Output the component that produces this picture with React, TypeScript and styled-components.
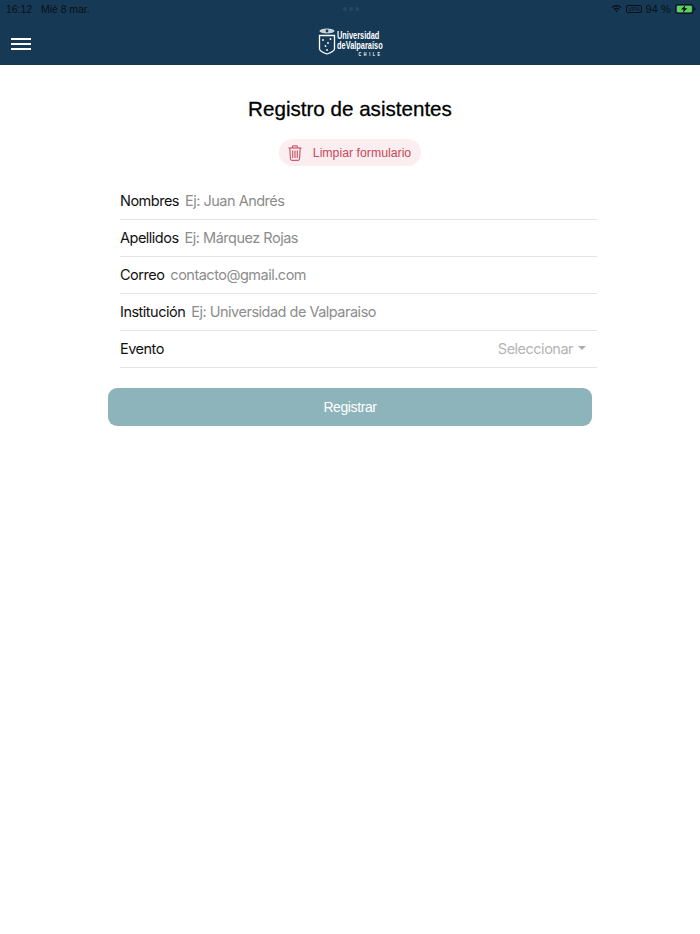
import React from "react";
import styled, { createGlobalStyle } from "styled-components";

const fields = [
  { id: "f1", label: "Nombres", placeholder: "Ej: Juan Andrés" },
  { id: "f2", label: "Apellidos", placeholder: "Ej: Márquez Rojas" },
  { id: "f3", label: "Correo", placeholder: "contacto@gmail.com" },
  { id: "f4", label: "Institución", placeholder: "Ej: Universidad de Valparaiso" },
];

const App = () => {
  return (
    <Page>
      <GlobalStyle />
      <Header>
        <StatusBar>
          <StatusLeft>
            <span>16:12</span>
            <span>Mié 8 mar.</span>
          </StatusLeft>
          <Dots>
            <i />
            <i />
            <i />
          </Dots>
          <StatusRight>
            <svg width="11" height="9" viewBox="0 0 13 10">
              <path d="M0.5 3.4a8.6 8.6 0 0 1 12 0l-1 1.1a7.1 7.1 0 0 0-10 0z" fill="#0b0f14" />
              <path d="M2.7 5.6a5.5 5.5 0 0 1 7.6 0l-1.1 1.1a4 4 0 0 0-5.4 0z" fill="#0b0f14" />
              <path d="M4.9 7.8a2.3 2.3 0 0 1 3.2 0L6.5 9.5z" fill="#0b0f14" />
            </svg>
            <VpnBadge>VPN</VpnBadge>
            <BatteryText>94 %</BatteryText>
            <svg width="21" height="10" viewBox="0 0 23 11">
              <rect x="0.5" y="0.5" width="19.5" height="10" rx="2.5" fill="none" stroke="#0b0f14" />
              <rect x="2" y="2" width="16.5" height="7" rx="1.2" fill="#5ed15e" />
              <path d="M21 3.7c1 .3 1.5 1 1.5 1.8s-.5 1.5-1.5 1.8z" fill="#0b0f14" />
              <path d="M11.5 1L6.5 6h3l-1 4 5-5.2h-3z" fill="#0b0f14" />
            </svg>
          </StatusRight>
        </StatusBar>
        <NavBar>
          <MenuButton>
            <i />
            <i />
            <i />
          </MenuButton>
          <Logo>
            <svg width="18" height="27" viewBox="0 0 18 27">
              <ellipse cx="9" cy="3" rx="7.5" ry="2.4" fill="#c9d3da" />
              <circle cx="9" cy="3" r="1.4" fill="#163a56" />
              <path
                d="M1.5 7.5h15v13.2c0 2.4-3.6 4-7.5 5.3-3.900-1.300-7.500-2.900-7.500-5.300z"
                fill="#163a56"
                stroke="#fff"
                strokeWidth="1.3"
              />
              <circle cx="5" cy="12" r="0.9" fill="#fff" />
              <circle cx="12.500" cy="11" r="0.9" fill="#fff" />
              <circle cx="10" cy="15" r="0.9" fill="#fff" />
              <circle cx="7.500" cy="18" r="0.9" fill="#fff" />
              <circle cx="9" cy="22" r="0.9" fill="#fff" />
            </svg>
            <LogoText>
              <span>Universidad</span>
              <span>deValparaíso</span>
              <LogoCountry>CHILE</LogoCountry>
            </LogoText>
          </Logo>
        </NavBar>
      </Header>

      <Main>
        <Title>Registro de asistentes</Title>
        <ClearButton>
          <svg width="14" height="16" viewBox="0 0 14 16" fill="none" stroke="#cf5a6c" strokeWidth="1.200">
            <path d="M0.500 3h13" />
            <path d="M4.500 3v-1.200c0-.6.400-1 1-1h3c.6 0 1 .4 1 1v1.200" />
            <path d="M1.800 3l.7 11c.1.7.500 1.300 1.300 1.300h6.400c.8 0 1.200-.6 1.300-1.300l.7-11" />
            <path d="M4.700 5.500v7.500M7 5.500v7.500M9.300 5.500v7.500" />
          </svg>
          Limpiar formulario
        </ClearButton>

        <Form>
          {fields.map((item) => (
            <Row key={item.id}>
              <Label>{item.label}</Label>
              <Placeholder>{item.placeholder}</Placeholder>
            </Row>
          ))}
          <Row>
            <Label>Evento</Label>
            <SelectValue>
              Seleccionar
              <Caret />
            </SelectValue>
          </Row>
        </Form>

        <SubmitButton>Registrar</SubmitButton>
      </Main>
    </Page>
  );
};

const GlobalStyle = createGlobalStyle`
  html, body {
    margin: 0;
    padding: 0;
    background: #fff;
  }
  body {
    font-family: "Liberation Sans", Arial, sans-serif;
  }
`;

const Page = styled.div`
  width: 700px;
  height: 934px;
  overflow: hidden;
  background: #fff;
`;

const Header = styled.header`
  height: 65px;
  background: #163a56;
`;

const StatusBar = styled.div`
  height: 17px;
  padding: 0 4px 0 6px;
  display: flex;
  align-items: center;
  justify-content: space-between;
  font-size: 11px;
  color: #0b0f14;
`;

const StatusLeft = styled.div`
  width: 150px;
  display: flex;
  gap: 9px;
  font-size: 10.500px;
  letter-spacing: -0.05px;
`;

const Dots = styled.div`
  display: flex;
  gap: 2px;

  i {
    width: 4px;
    height: 4px;
    border-radius: 50%;
    background: #24485f;
  }
`;

const StatusRight = styled.div`
  width: 150px;
  display: flex;
  align-items: center;
  justify-content: flex-end;
  gap: 4px;
`;

const VpnBadge = styled.span`
  font-size: 5.500px;
  line-height: 6px;
  padding: 0 1px;
  border: 1px solid #0b0f14;
  border-radius: 2px;
`;

const BatteryText = styled.span`
  letter-spacing: 0.1px;
`;

const NavBar = styled.div`
  height: 48px;
  position: relative;
  display: flex;
  align-items: center;
  justify-content: center;
`;

const MenuButton = styled.div`
  position: absolute;
  left: 11px;
  top: 21px;
  width: 20px;
  display: flex;
  flex-direction: column;
  gap: 3px;

  i {
    height: 2px;
    background: #fff;
  }
`;

const Logo = styled.div`
  display: flex;
  align-items: flex-start;
  gap: 1px;
  margin-top: 2px;
`;

const LogoText = styled.div`
  display: flex;
  flex-direction: column;
  padding-top: 3px;
  color: #fff;
  font-family: "Liberation Sans", Arial, sans-serif;
  font-size: 10px;
  font-weight: 700;
  line-height: 10px;
  transform: scaleX(0.74);
  transform-origin: left center;
  margin-right: -16px;
`;

const LogoCountry = styled.span`
  align-self: flex-end;
  font-size: 5px;
  line-height: 6px;
  letter-spacing: 3.500px;
`;

const Main = styled.main`
  display: flex;
  flex-direction: column;
  align-items: center;
  padding-top: 30px;
`;

const Title = styled.h1`
  margin: 0;
  font-size: 20.600px;
  line-height: 27px;
  font-weight: 400;
  color: #000;
  -webkit-text-stroke: 0.3px #000;
`;

const ClearButton = styled.div`
  margin-top: 17px;
  height: 27px;
  padding: 0 10px 0 9px;
  display: flex;
  align-items: center;
  gap: 11px;
  border-radius: 14px;
  background: #fbeef0;
  color: #c8475a;
  font-size: 12.300px;
`;

const Form = styled.div`
  width: 477px;
  margin-top: 16px;
  margin-left: 17px;
`;

const Row = styled.div`
  box-sizing: border-box;
  height: 37px;
  padding-bottom: 1px;
  display: flex;
  align-items: center;
  gap: 6px;
  box-shadow: 0 1px 0 #e4e4e4;
  font-family: "Inter", sans-serif;
  font-size: 14.500px;
  letter-spacing: -0.5px;
`;

const Label = styled.span`
  color: #111;
`;

const Placeholder = styled.span`
  color: #8c8c8c;
`;

const SelectValue = styled.span`
  margin-left: auto;
  margin-right: 11px;
  display: flex;
  align-items: center;
  gap: 5px;
  color: #b4b4b4;
`;

const Caret = styled.i`
  width: 0;
  height: 0;
  border-left: 4.500px solid transparent;
  border-right: 4.500px solid transparent;
  border-top: 4.500px solid #adadad;
`;

const SubmitButton = styled.div`
  width: 484px;
  height: 38px;
  margin-top: 21px;
  display: flex;
  align-items: center;
  justify-content: center;
  border-radius: 9px;
  background: #8db4ba;
  color: #fff;
  font-size: 14px;
  letter-spacing: -0.4px;
`;

export default App;
